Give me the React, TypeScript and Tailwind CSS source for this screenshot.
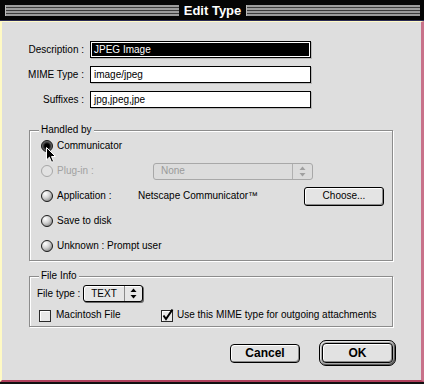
import React from "react"

function Stripes() {
  return (
    <div className="flex-1 h-[11px] flex flex-col justify-between bg-[#3c3c3c] border-l border-[#bbbbbb]">
      <div className="h-[2px] bg-[#9c9c9c]"></div>
      <div className="h-[2px] bg-[#9c9c9c]"></div>
      <div className="h-[2px] bg-[#9c9c9c]"></div>
      <div className="h-[2px] bg-[#9c9c9c]"></div>
    </div>
  )
}

function Radio({ checked = false, disabled = false }: { checked?: boolean; disabled?: boolean }) {
  if (disabled) {
    return (
      <svg width="12" height="12" viewBox="0 0 12 12" className="shrink-0">
        <circle cx="6" cy="6" r="5.5" fill="#e2e2e2" stroke="#a6a6a6" />
      </svg>
    )
  }
  return (
    <svg width="12" height="12" viewBox="0 0 12 12" className="shrink-0">
      <defs>
        <radialGradient id="radioFill" cx="0.35" cy="0.3" r="0.75">
          <stop offset="0" stopColor="#ffffff" />
          <stop offset="0.5" stopColor="#d4d4d4" />
          <stop offset="1" stopColor="#8a8a8a" />
        </radialGradient>
        <radialGradient id="radioOn" cx="0.5" cy="0.5" r="0.6">
          <stop offset="0" stopColor="#111111" />
          <stop offset="0.45" stopColor="#222222" />
          <stop offset="0.7" stopColor="#666666" />
          <stop offset="1" stopColor="#333333" />
        </radialGradient>
      </defs>
      <circle cx="6" cy="6" r="5.5" fill={checked ? "url(#radioOn)" : "url(#radioFill)"} stroke="#1c1c1c" />
      {checked && <circle cx="6" cy="6" r="2.6" fill="#000" />}
    </svg>
  )
}

function Checkbox({ checked = false }: { checked?: boolean }) {
  return (
    <svg width="13" height="13" viewBox="0 0 13 13" className="shrink-0 overflow-visible">
      <rect x="0.5" y="1.5" width="11" height="11" fill="#e8e8e8" stroke="#2a2a2a" />
      <path d="M1.5 12 V2.5 H10.5" stroke="#ffffff" fill="none" />
      {checked && <path d="M2.5 6.5 L5 10 L11.5 0.5" stroke="#000" strokeWidth="2" fill="none" />}
    </svg>
  )
}

function Cursor() {
  return (
    <svg width="11" height="17" viewBox="0 0 11 17" className="absolute left-[5px] top-[7px]">
      <path d="M0.5 0.5 V13 L3.4 10.2 L5.6 15.3 L7.6 14.4 L5.5 9.5 L9.5 9.5 Z" fill="#000" stroke="#fff" strokeWidth="1" />
    </svg>
  )
}

function Arrows({ color = "#000" }: { color?: string }) {
  return (
    <svg width="7" height="11" viewBox="0 0 7 11">
      <path d="M3.5 0.5 L6.5 4 H0.5 Z" fill={color} />
      <path d="M3.5 10.5 L6.5 7 H0.5 Z" fill={color} />
    </svg>
  )
}

export default function App() {
  return (
    <div className="w-[424px] h-[384px] flex flex-col pb-[2px] bg-[#111111] font-['Liberation_Sans',Arial,sans-serif] text-[10px] leading-none text-black">
      {/* Title bar */}
      <div className="h-[21px] shrink-0 flex items-center gap-[4px] pl-[5px] pr-[4px] bg-[#050505] border-b border-[#2a2a55]">
        <Stripes />
        <span className="text-white font-bold text-[13px] px-[1px]">Edit Type</span>
        <Stripes />
      </div>

      {/* Body */}
      <div className="flex-1 flex flex-col bg-[#dedede] border-t border-l-2 border-t-[#fffac4] border-l-[#fffac4] border-r-[3px] border-r-[#c8728a] border-b-2 border-b-[#b0405c]">
        {/* Fields */}
        <div className="pt-[19px] flex flex-col gap-[8px]">
          {[
            { label: "Description :", value: "JPEG Image", selected: true },
            { label: "MIME Type :", value: "image/jpeg", selected: false },
            { label: "Suffixes :", value: "jpg,jpeg,jpe", selected: false },
          ].map((f) => (
            <div key={f.label} className="h-[17px] flex items-center">
              <span className="ml-[25px] w-[57px] text-right whitespace-nowrap">{f.label}</span>
              <div className="ml-[6px] w-[221px] h-[17px] border border-black bg-white p-px shadow-[1px_1px_0_#b8b8b8]">
                <div className={f.selected ? "h-full bg-black text-white flex items-center pl-[2px]" : "h-full flex items-center pl-[2px]"}>
                  {f.value}
                </div>
              </div>
            </div>
          ))}
        </div>

        {/* Handled by */}
        <div className="relative mt-[22px] ml-[27px] w-[364px] border border-[#8c8c8c] shadow-[inset_1px_1px_0_#ffffff,1px_1px_0_#ffffff] pt-[5px] pb-[4px] pl-[11px] pr-[8px] flex flex-col gap-[5px]">
          <span className="absolute left-[9px] top-[-7px] px-[2px] bg-[#dedede] leading-[12px]">Handled by</span>

          <div className="h-[20px] flex items-center">
            <div className="relative">
              <Radio checked />
              <Cursor />
            </div>
            <span className="ml-[4px]">Communicator</span>
          </div>

          <div className="h-[20px] flex items-center">
            <Radio disabled />
            <span className="ml-[4px] w-[96px] text-[#a2a2a2]">Plug-in :</span>
            <div className="w-[160px] h-[17px] flex items-center border border-[#a8a8a8] rounded-[3px] bg-[#dcdcdc]">
              <span className="flex-1 pl-[7px] text-[#9a9a9a]">None</span>
              <div className="w-[20px] h-full flex items-center justify-center border-l border-[#b0b0b0]">
                <Arrows color="#a0a0a0" />
              </div>
            </div>
          </div>

          <div className="h-[20px] flex items-center">
            <Radio />
            <span className="ml-[4px] w-[81px]">Application :</span>
            <span className="flex-1">Netscape Communicator™</span>
            <button className="w-[80px] h-[19px] rounded-[3px] border border-black bg-[#e4e4e4] shadow-[inset_1px_1px_0_#ffffff,inset_-1px_-1px_0_#8a8a8a] flex items-center justify-center">
              Choose...
            </button>
          </div>

          <div className="h-[20px] flex items-center">
            <Radio />
            <span className="ml-[4px]">Save to disk</span>
          </div>

          <div className="h-[20px] flex items-center">
            <Radio />
            <span className="ml-[4px]">Unknown : Prompt user</span>
          </div>
        </div>

        {/* File Info */}
        <div className="relative mt-[15px] ml-[27px] w-[364px] border border-[#8c8c8c] shadow-[inset_1px_1px_0_#ffffff,1px_1px_0_#ffffff] pt-[8px] pb-[5px] flex flex-col gap-[7px]">
          <span className="absolute left-[9px] top-[-7px] px-[2px] bg-[#dedede] leading-[12px]">File Info</span>

          <div className="h-[17px] flex items-center pl-[7px]">
            <span className="w-[46px]">File type :</span>
            <div className="w-[60px] h-[17px] flex items-center border border-black rounded-[3px] bg-[#e6e6e6] shadow-[inset_1px_1px_0_#ffffff,1px_1px_0_#6a6a6a]">
              <span className="w-[40px] text-center">TEXT</span>
              <div className="flex-1 h-full flex items-center justify-center border-l border-[#8a8a8a]">
                <Arrows />
              </div>
            </div>
          </div>

          <div className="h-[12px] flex items-center pl-[9px]">
            <div className="w-[122px] flex items-center gap-[4px]">
              <Checkbox />
              <span>Macintosh File</span>
            </div>
            <div className="flex items-center gap-[3px]">
              <Checkbox checked />
              <span>Use this MIME type for outgoing attachments</span>
            </div>
          </div>
        </div>

        {/* Buttons */}
        <div className="mt-[13px] pr-[25px] flex items-center justify-end gap-[19px]">
          <button className="w-[70px] h-[19px] rounded-[4px] border border-black bg-[#e2e2e2] shadow-[inset_1px_1px_0_#ffffff,inset_-1px_-1px_0_#8a8a8a] font-bold text-[12px]">
            Cancel
          </button>
          <div className="w-[77px] h-[26px] rounded-[7px] border border-black bg-[#a8a8a8] shadow-[inset_1px_1px_0_#e6e6e6,inset_-1px_-1px_0_#5a5a5a] p-[2px]">
            <button className="w-full h-full rounded-[4px] border border-black bg-[#e2e2e2] shadow-[inset_1px_1px_0_#ffffff,inset_-1px_-1px_0_#8a8a8a] font-bold text-[12px]">
              OK
            </button>
          </div>
        </div>
      </div>
    </div>
  )
}
